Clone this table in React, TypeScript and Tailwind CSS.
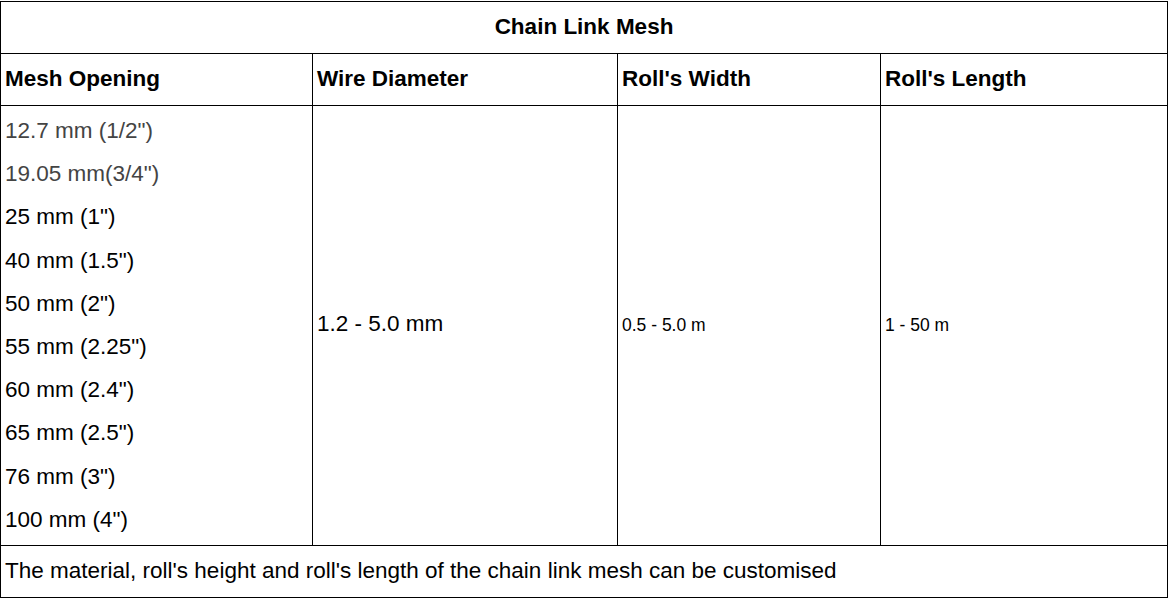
const openings = [
  { text: '12.7 mm (1/2")', muted: true },
  { text: '19.05 mm(3/4")', muted: true },
  { text: '25 mm (1")' },
  { text: '40 mm (1.5")' },
  { text: '50 mm (2")' },
  { text: '55 mm (2.25")' },
  { text: '60 mm (2.4")' },
  { text: '65 mm (2.5")' },
  { text: '76 mm (3")' },
  { text: '100 mm (4")' },
];

export default function App() {
  return (
    <div className="h-[600px] w-[1170px] bg-white pt-px font-['Liberation_Sans',Arial,sans-serif] text-black">
      <table className="w-[1167px] table-fixed border-collapse border border-black">
        <colgroup>
          <col className="w-[312px]" />
          <col className="w-[305px]" />
          <col className="w-[263px]" />
          <col className="w-[287px]" />
        </colgroup>
        <tbody>
          <tr className="h-[52px]">
            <td colSpan={4} className="border border-black pb-0.5 text-center text-[22.5px] font-bold">
              Chain Link Mesh
            </td>
          </tr>
          <tr className="h-[52px]">
            {["Mesh Opening", "Wire Diameter", "Roll's Width", "Roll's Length"].map((h) => (
              <td key={h} className="border border-black px-1 pb-0.5 text-[22.5px] font-bold">
                {h}
              </td>
            ))}
          </tr>
          <tr className="h-[440px]">
            <td className="border border-black px-1 pt-[3px] pb-[4px] align-top text-[22.5px]">
              {openings.map((o) => (
                <p key={o.text} className={`leading-[43.2px] ${o.muted ? "text-[#444]" : ""}`}>
                  {o.text}
                </p>
              ))}
            </td>
            <td className="border border-black px-1 pb-1 text-[22.5px]">1.2 - 5.0 mm</td>
            <td className="border border-black px-1 text-[17.5px]">0.5 - 5.0 m</td>
            <td className="border border-black px-1 text-[17.5px]">1 - 50 m</td>
          </tr>
          <tr className="h-[52px]">
            <td colSpan={4} className="border border-black px-1 pb-0.5 text-[22.5px]">
              The material, roll's height and roll's length of the chain link mesh can be customised
            </td>
          </tr>
        </tbody>
      </table>
    </div>
  );
}
